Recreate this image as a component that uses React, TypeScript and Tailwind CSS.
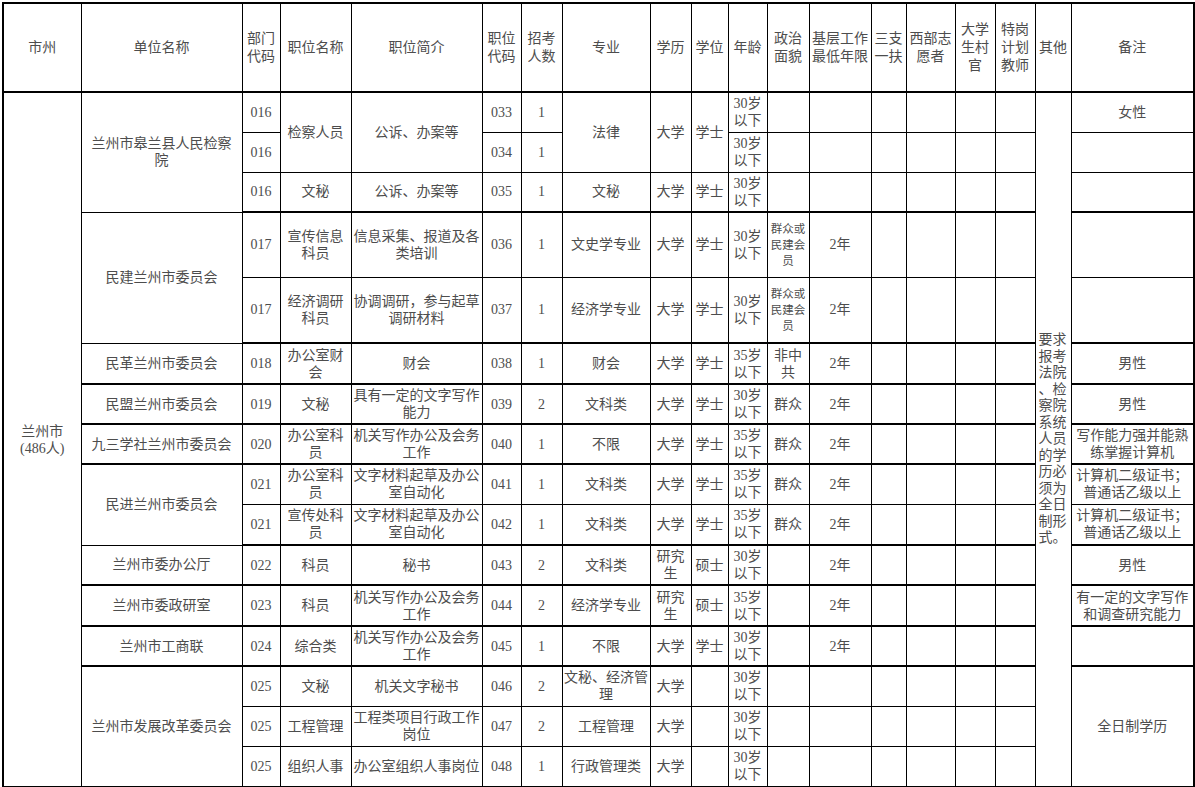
import React from "react";

type Cell = {
  t?: string;
  rs?: number;
  sm?: boolean;
  left?: boolean;
};

const cols = [
  "w-[78px]",
  "w-[161px]",
  "w-[38px]",
  "w-[71px]",
  "w-[131px]",
  "w-[39px]",
  "w-[41px]",
  "w-[88px]",
  "w-[41px]",
  "w-[37px]",
  "w-[39px]",
  "w-[42px]",
  "w-[62px]",
  "w-[35px]",
  "w-[49px]",
  "w-[40px]",
  "w-[40px]",
  "w-[36px]",
  "w-[123px]",
];

const headers = [
  "市州",
  "单位名称",
  "部门|代码",
  "职位名称",
  "职位简介",
  "职位|代码",
  "招考|人数",
  "专业",
  "学历",
  "学位",
  "年龄",
  "政治|面貌",
  "基层工作|最低年限",
  "三支|一扶",
  "西部志|愿者",
  "大学|生村|官",
  "特岗|计划|教师",
  "其他",
  "备注",
];

const e = (n: number): Cell[] => Array.from({ length: n }, () => ({ t: "" }));

const other =
  "要求|报考|法院|、检|察院|系统|人员|的学|历必|须为|全日|制形|式。";

// each row: [height class, group end, cells]
const rows: [string, boolean, Cell[]][] = [
  [
    "h-[40px]",
    false,
    [
      { t: "兰州市|(486人)", rs: 16 },
      { t: "兰州市皋兰县人民检察|院", rs: 3 },
      { t: "016" },
      { t: "检察人员", rs: 2 },
      { t: "公诉、办案等", rs: 2 },
      { t: "033" },
      { t: "1" },
      { t: "法律", rs: 2 },
      { t: "大学", rs: 2 },
      { t: "学士", rs: 2 },
      { t: "30岁|以下" },
      ...e(6),
      { t: other, rs: 16, left: true },
      { t: "女性" },
    ],
  ],
  ["h-[40px]", false, [{ t: "016" }, { t: "034" }, { t: "1" }, { t: "30岁|以下" }, ...e(6), { t: "" }]],
  [
    "h-[40px]",
    true,
    [
      { t: "016" },
      { t: "文秘" },
      { t: "公诉、办案等" },
      { t: "035" },
      { t: "1" },
      { t: "文秘" },
      { t: "大学" },
      { t: "学士" },
      { t: "30岁|以下" },
      ...e(6),
      { t: "" },
    ],
  ],
  [
    "h-[65px]",
    false,
    [
      { t: "民建兰州市委员会", rs: 2 },
      { t: "017" },
      { t: "宣传信息|科员" },
      { t: "信息采集、报道及各|类培训" },
      { t: "036" },
      { t: "1" },
      { t: "文史学专业" },
      { t: "大学" },
      { t: "学士" },
      { t: "30岁|以下" },
      { t: "群众或|民建会|员", sm: true },
      { t: "2年" },
      ...e(4),
      { t: "" },
    ],
  ],
  [
    "h-[66px]",
    true,
    [
      { t: "017" },
      { t: "经济调研|科员" },
      { t: "协调调研，参与起草|调研材料" },
      { t: "037" },
      { t: "1" },
      { t: "经济学专业" },
      { t: "大学" },
      { t: "学士" },
      { t: "30岁|以下" },
      { t: "群众或|民建会|员", sm: true },
      { t: "2年" },
      ...e(4),
      { t: "" },
    ],
  ],
  [
    "h-[41px]",
    true,
    [
      { t: "民革兰州市委员会" },
      { t: "018" },
      { t: "办公室财|会" },
      { t: "财会" },
      { t: "038" },
      { t: "1" },
      { t: "财会" },
      { t: "大学" },
      { t: "学士" },
      { t: "35岁|以下" },
      { t: "非中|共" },
      { t: "2年" },
      ...e(4),
      { t: "男性" },
    ],
  ],
  [
    "h-[40px]",
    true,
    [
      { t: "民盟兰州市委员会" },
      { t: "019" },
      { t: "文秘" },
      { t: "具有一定的文字写作|能力" },
      { t: "039" },
      { t: "2" },
      { t: "文科类" },
      { t: "大学" },
      { t: "学士" },
      { t: "30岁|以下" },
      { t: "群众" },
      { t: "2年" },
      ...e(4),
      { t: "男性" },
    ],
  ],
  [
    "h-[40px]",
    true,
    [
      { t: "九三学社兰州市委员会" },
      { t: "020" },
      { t: "办公室科|员" },
      { t: "机关写作办公及会务|工作" },
      { t: "040" },
      { t: "1" },
      { t: "不限" },
      { t: "大学" },
      { t: "学士" },
      { t: "35岁|以下" },
      { t: "群众" },
      { t: "2年" },
      ...e(4),
      { t: "写作能力强并能熟|练掌握计算机" },
    ],
  ],
  [
    "h-[40px]",
    false,
    [
      { t: "民进兰州市委员会", rs: 2 },
      { t: "021" },
      { t: "办公室科|员" },
      { t: "文字材料起草及办公|室自动化" },
      { t: "041" },
      { t: "1" },
      { t: "文科类" },
      { t: "大学" },
      { t: "学士" },
      { t: "35岁|以下" },
      { t: "群众" },
      { t: "2年" },
      ...e(4),
      { t: "计算机二级证书；|普通话乙级以上" },
    ],
  ],
  [
    "h-[41px]",
    true,
    [
      { t: "021" },
      { t: "宣传处科|员" },
      { t: "文字材料起草及办公|室自动化" },
      { t: "042" },
      { t: "1" },
      { t: "文科类" },
      { t: "大学" },
      { t: "学士" },
      { t: "35岁|以下" },
      { t: "群众" },
      { t: "2年" },
      ...e(4),
      { t: "计算机二级证书；|普通话乙级以上" },
    ],
  ],
  [
    "h-[40px]",
    true,
    [
      { t: "兰州市委办公厅" },
      { t: "022" },
      { t: "科员" },
      { t: "秘书" },
      { t: "043" },
      { t: "2" },
      { t: "文科类" },
      { t: "研究|生" },
      { t: "硕士" },
      { t: "30岁|以下" },
      { t: "" },
      { t: "2年" },
      ...e(4),
      { t: "男性" },
    ],
  ],
  [
    "h-[41px]",
    true,
    [
      { t: "兰州市委政研室" },
      { t: "023" },
      { t: "科员" },
      { t: "机关写作办公及会务|工作" },
      { t: "044" },
      { t: "2" },
      { t: "经济学专业" },
      { t: "研究|生" },
      { t: "硕士" },
      { t: "35岁|以下" },
      { t: "" },
      { t: "2年" },
      ...e(4),
      { t: "有一定的文字写作|和调查研究能力" },
    ],
  ],
  [
    "h-[40px]",
    true,
    [
      { t: "兰州市工商联" },
      { t: "024" },
      { t: "综合类" },
      { t: "机关写作办公及会务|工作" },
      { t: "045" },
      { t: "1" },
      { t: "不限" },
      { t: "大学" },
      { t: "学士" },
      { t: "30岁|以下" },
      { t: "" },
      { t: "2年" },
      ...e(4),
      { t: "" },
    ],
  ],
  [
    "h-[40px]",
    false,
    [
      { t: "兰州市发展改革委员会", rs: 3 },
      { t: "025" },
      { t: "文秘" },
      { t: "机关文字秘书" },
      { t: "046" },
      { t: "2" },
      { t: "文秘、经济管|理" },
      { t: "大学" },
      { t: "" },
      { t: "30岁|以下" },
      ...e(6),
      { t: "全日制学历", rs: 3 },
    ],
  ],
  [
    "h-[40px]",
    false,
    [
      { t: "025" },
      { t: "工程管理" },
      { t: "工程类项目行政工作|岗位" },
      { t: "047" },
      { t: "2" },
      { t: "工程管理" },
      { t: "大学" },
      { t: "" },
      { t: "30岁|以下" },
      ...e(6),
    ],
  ],
  [
    "h-[41px]",
    false,
    [
      { t: "025" },
      { t: "组织人事" },
      { t: "办公室组织人事岗位" },
      { t: "048" },
      { t: "1" },
      { t: "行政管理类" },
      { t: "大学" },
      { t: "" },
      { t: "30岁|以下" },
      ...e(6),
    ],
  ],
];

const Lines = ({ t }: { t: string }) => (
  <>
    {t.split("|").map((s, i) => (
      <React.Fragment key={i}>
        {i > 0 && <br />}
        {s}
      </React.Fragment>
    ))}
  </>
);

export default function App() {
  return (
    <div className="min-h-[787px] bg-white pt-[2px] pl-[2px] text-[#4d4d4d] font-['Liberation_Serif','Noto_Sans_CJK_SC',serif]">
      <table className="table-fixed border-collapse border-2 border-black w-[1191px] text-[14px] leading-[17px]">
        <colgroup>
          {cols.map((w, i) => (
            <col key={i} className={w} />
          ))}
        </colgroup>
        <thead>
          <tr className="h-[89px]">
            {headers.map((h, i) => (
              <th
                key={i}
                className="border border-b-2 border-black font-normal text-center align-middle px-0 leading-[18px]"
              >
                <Lines t={h} />
              </th>
            ))}
          </tr>
        </thead>
        <tbody>
          {rows.map(([h, end, cells], ri) => (
            <tr key={ri} className={h}>
              {cells.map((c, ci) => (
                <td
                  key={ci}
                  rowSpan={c.rs}
                  className={`border border-black align-middle px-0 ${
                    end ? "border-b-2" : ""
                  } ${
                    c.left
                      ? "text-left pl-[3px] leading-[16.5px]"
                      : "text-center"
                  } ${c.sm ? "text-[11.5px] leading-[16px]" : ""}`}
                >
                  {c.t ? <Lines t={c.t} /> : null}
                </td>
              ))}
            </tr>
          ))}
        </tbody>
      </table>
    </div>
  );
}
